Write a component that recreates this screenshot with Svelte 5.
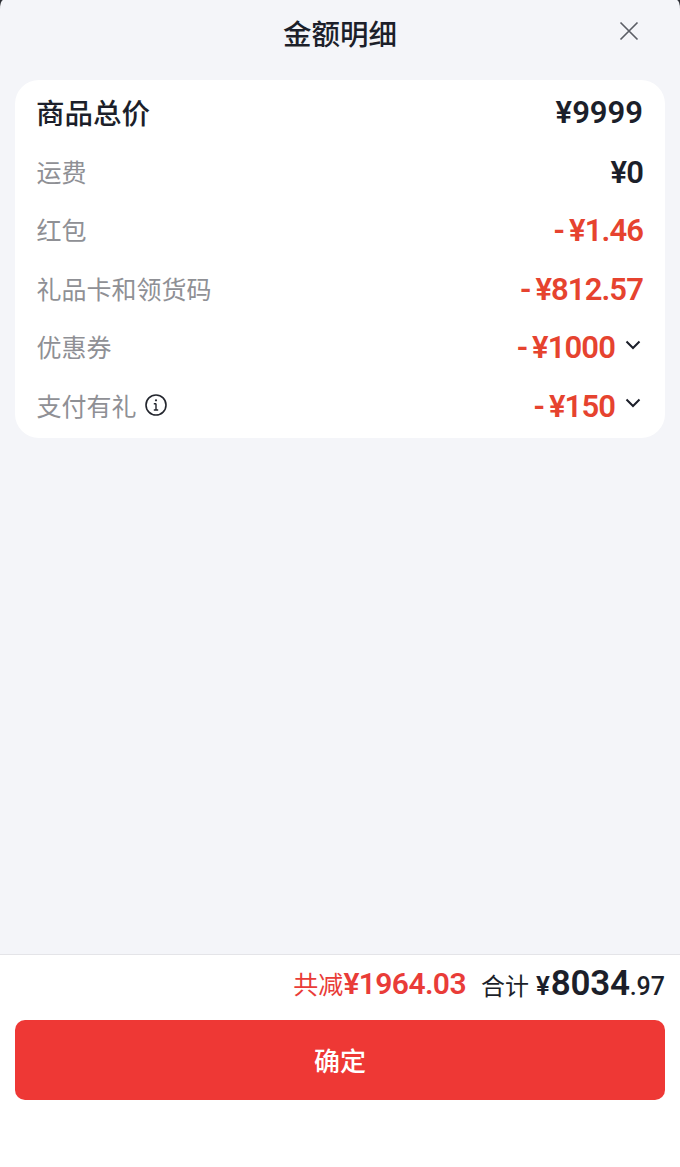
<script>
    const rows = [
        { label: '运费', value: '¥0' },
        { label: '红包', value: '¥1.46', red: true },
        { label: '礼品卡和领货码', value: '¥812.57', red: true },
        { label: '优惠券', value: '¥1000', red: true, more: true },
        { label: '支付有礼', value: '¥150', red: true, more: true, info: true }
    ];
</script>

<div class="sheet">
    <header class="head">
        <h1>金额明细</h1>
        <button class="close" aria-label="关闭">
            <svg width="22" height="22" viewBox="0 0 22 22" fill="none" stroke="#5b5e66" stroke-width="1.7">
                <path d="M2.5 2.5 19.5 19.5M19.500 2.5 2.5 19.5" />
            </svg>
        </button>
    </header>

    <section class="card">
        <div class="row first">
            <span class="title">商品总价</span>
            <span class="num wide">¥9999</span>
        </div>
        {#each rows as row}
            <div class="row">
                <span class="label">
                    {row.label}
                    {#if row.info}
                        <svg class="info" width="24" height="24" viewBox="0 0 24 24" fill="none" stroke="#23262e" stroke-width="1.6">
                            <circle cx="12" cy="12" r="10" />
                            <path d="M12 10.5v6.5M9.800 10.800H12M9.800 17h4.400" stroke-width="1.4" />
                            <circle cx="12" cy="7.300" r="1.100" fill="#23262e" stroke="none" />
                        </svg>
                    {/if}
                </span>
                <span class="right">
                    <span class="num" class:red={row.red}>
                        {#if row.red}<span class="minus">-</span>{/if}{row.value}
                    </span>
                    {#if row.more}
                        <svg class="chev" width="16" height="10" viewBox="0 0 16 10" fill="none" stroke="#1c1f2a" stroke-width="2">
                            <path d="M1.500 1.500 8 8l6.500-6.500" />
                        </svg>
                    {/if}
                </span>
            </div>
        {/each}
    </section>

    <footer class="foot">
        <div class="total">
            <span class="saved">共减<b>¥1964.03</b></span>
            <span class="sum">合计<b class="yen">¥</b><b class="big">8034</b><b class="cents">.97</b></span>
        </div>
        <button class="confirm">确定</button>
    </footer>
</div>

<style>
    :global(body) {
        background: #2b2d33;
    }

    .sheet {
        height: 1167px;
        display: flex;
        flex-direction: column;
        background: #f4f5f9;
        border-radius: 3px 3px 0 0 / 9px 9px 0 0;
        overflow: hidden;
        font-family: Roboto, "Noto Sans CJK SC", sans-serif;
        color: #1c1f2a;
    }

    .head {
        height: 80px;
        flex: none;
        position: relative;
        display: flex;
        justify-content: center;
        align-items: center;
        padding-bottom: 9px;
        box-sizing: border-box;
    }

    .head h1 {
        margin: 0;
        font-size: 28.500px;
        font-weight: 500;
        line-height: 40px;
    }

    .close {
        position: absolute;
        right: 40px;
        top: 20px;
        width: 22px;
        height: 22px;
        padding: 0;
        border: 0;
        background: none;
    }

    .card {
        margin: 0 15px;
        padding: 4px 22px 3px;
        background: #fff;
        border-radius: 24px;
    }

    .row {
        height: 58.500px;
        display: flex;
        justify-content: space-between;
        align-items: center;
    }

    .first {
        height: 58px;
        padding-bottom: 3px;
        box-sizing: border-box;
    }

    .title {
        font-size: 28.500px;
        font-weight: 500;
        margin-left: -1px;
    }

    .label {
        display: flex;
        align-items: center;
        gap: 7px;
        font-size: 25px;
        color: #8f9095;
        margin-left: -0.500px;
        margin-top: -1px;
    }

    .right {
        display: flex;
        align-items: center;
    }

    .num {
        margin-top: 2px;
        font-size: 31px;
        font-weight: 600;
        letter-spacing: -0.9px;
    }

    .wide {
        letter-spacing: 0;
    }

    .minus {
        margin-right: 5px;
    }

    .red {
        color: #e6432f;
    }

    .chev {
        margin-left: 10px;
        margin-right: 2px;
        margin-top: -4px;
    }

    .foot {
        flex: 1;
        margin-top: 516px;
        background: #fff;
        border-top: 1px solid #e4e4e8;
        padding: 0 15px;
    }

    .total {
        height: 65px;
        padding-bottom: 8px;
        box-sizing: border-box;
        display: flex;
        justify-content: flex-end;
        align-items: center;
        gap: 15px;
    }

    .saved {
        font-size: 25px;
        color: #e93c38;
    }

    .saved b {
        font-size: 30px;
        font-weight: 600;
        letter-spacing: -0.6px;
    }

    .sum {
        font-size: 24px;
    }

    .yen {
        font-size: 26px;
        font-weight: 600;
        margin-left: 7px;
        margin-right: 1px;
    }

    .big {
        font-size: 35px;
        font-weight: 600;
        letter-spacing: -0.3px;
    }

    .cents {
        font-size: 25px;
        font-weight: 500;
    }

    .confirm {
        display: block;
        width: 100%;
        height: 80px;
        border: 0;
        border-radius: 10px;
        background: #ee3835;
        color: #fff;
        font-family: inherit;
        font-size: 26px;
        font-weight: 500;
    }
</style>
